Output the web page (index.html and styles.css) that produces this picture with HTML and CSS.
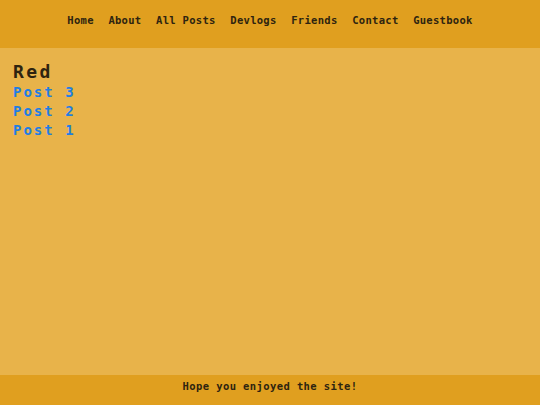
FILE: index.html
```html
<!DOCTYPE html>
<html lang="en">
<head>
  <meta charset="UTF-8" />
  <meta name="viewport" content="width=device-width, initial-scale=1.0"/>
  <title>Red</title>
  <link rel="stylesheet" href="styles.css">
</head>
<body>
  <header class="topbar">
    <nav class="nav">
      <a href="index.html">Home</a>
      <a href="about.html">About</a>
      <a href="posts.html">All Posts</a>
      <a href="devlogs.html">Devlogs</a>
      <a href="friends.html">Friends</a>
      <a href="contact.html">Contact</a>
      <a href="guestbook.html">Guestbook</a>
    </nav>
  </header>
  <main class="content">
    <h1 class="tag-title">Red</h1>
    <ul class="post-list">
      <li><a href="post3.html">Post 3</a></li>
      <li><a href="post2.html">Post 2</a></li>
      <li><a href="post1.html">Post 1</a></li>
    </ul>
  </main>
  <footer class="footer">Hope you enjoyed the site!</footer>
</body>
</html>
```

FILE: styles.css
```css
:root {
  --bar-color: #e09f1f;
  --bg-color: #e8b34a;
  --text-color: #2e2410;
  --link-color: #1f7ee4;
}
html, body {
  height: 100%;
}
body {
  margin: 0;
  font-family: 'DejaVu Sans Mono', monospace;
  background-color: var(--bg-color);
  color: var(--text-color);
  display: flex;
  flex-direction: column;
}
.topbar {
  background-color: var(--bar-color);
  height: 48px;
  box-sizing: border-box;
  padding-top: 13px;
}
.nav {
  display: flex;
  justify-content: center;
  gap: 14.6px;
  font-size: 10.5px;
  letter-spacing: 0.3px;
  font-weight: bold;
  line-height: 15px;
}
.nav a {
  color: var(--text-color);
  text-decoration: none;
}
.content {
  flex: 1;
  padding: 0 13px;
}
.tag-title {
  margin: 13px 0 0;
  font-size: 18px;
  letter-spacing: 2.4px;
  line-height: 22px;
}
.post-list {
  list-style: none;
  margin: 0;
  padding: 0;
}
.post-list li {
  line-height: 19px;
  font-size: 14px;
  letter-spacing: 2px;
  font-weight: bold;
}
.post-list a {
  color: var(--link-color);
  text-decoration: none;
}
.footer {
  background-color: var(--bar-color);
  height: 30px;
  line-height: 22px;
  text-align: center;
  font-size: 10.5px;
  letter-spacing: 0.4px;
  font-weight: bold;
}
```
